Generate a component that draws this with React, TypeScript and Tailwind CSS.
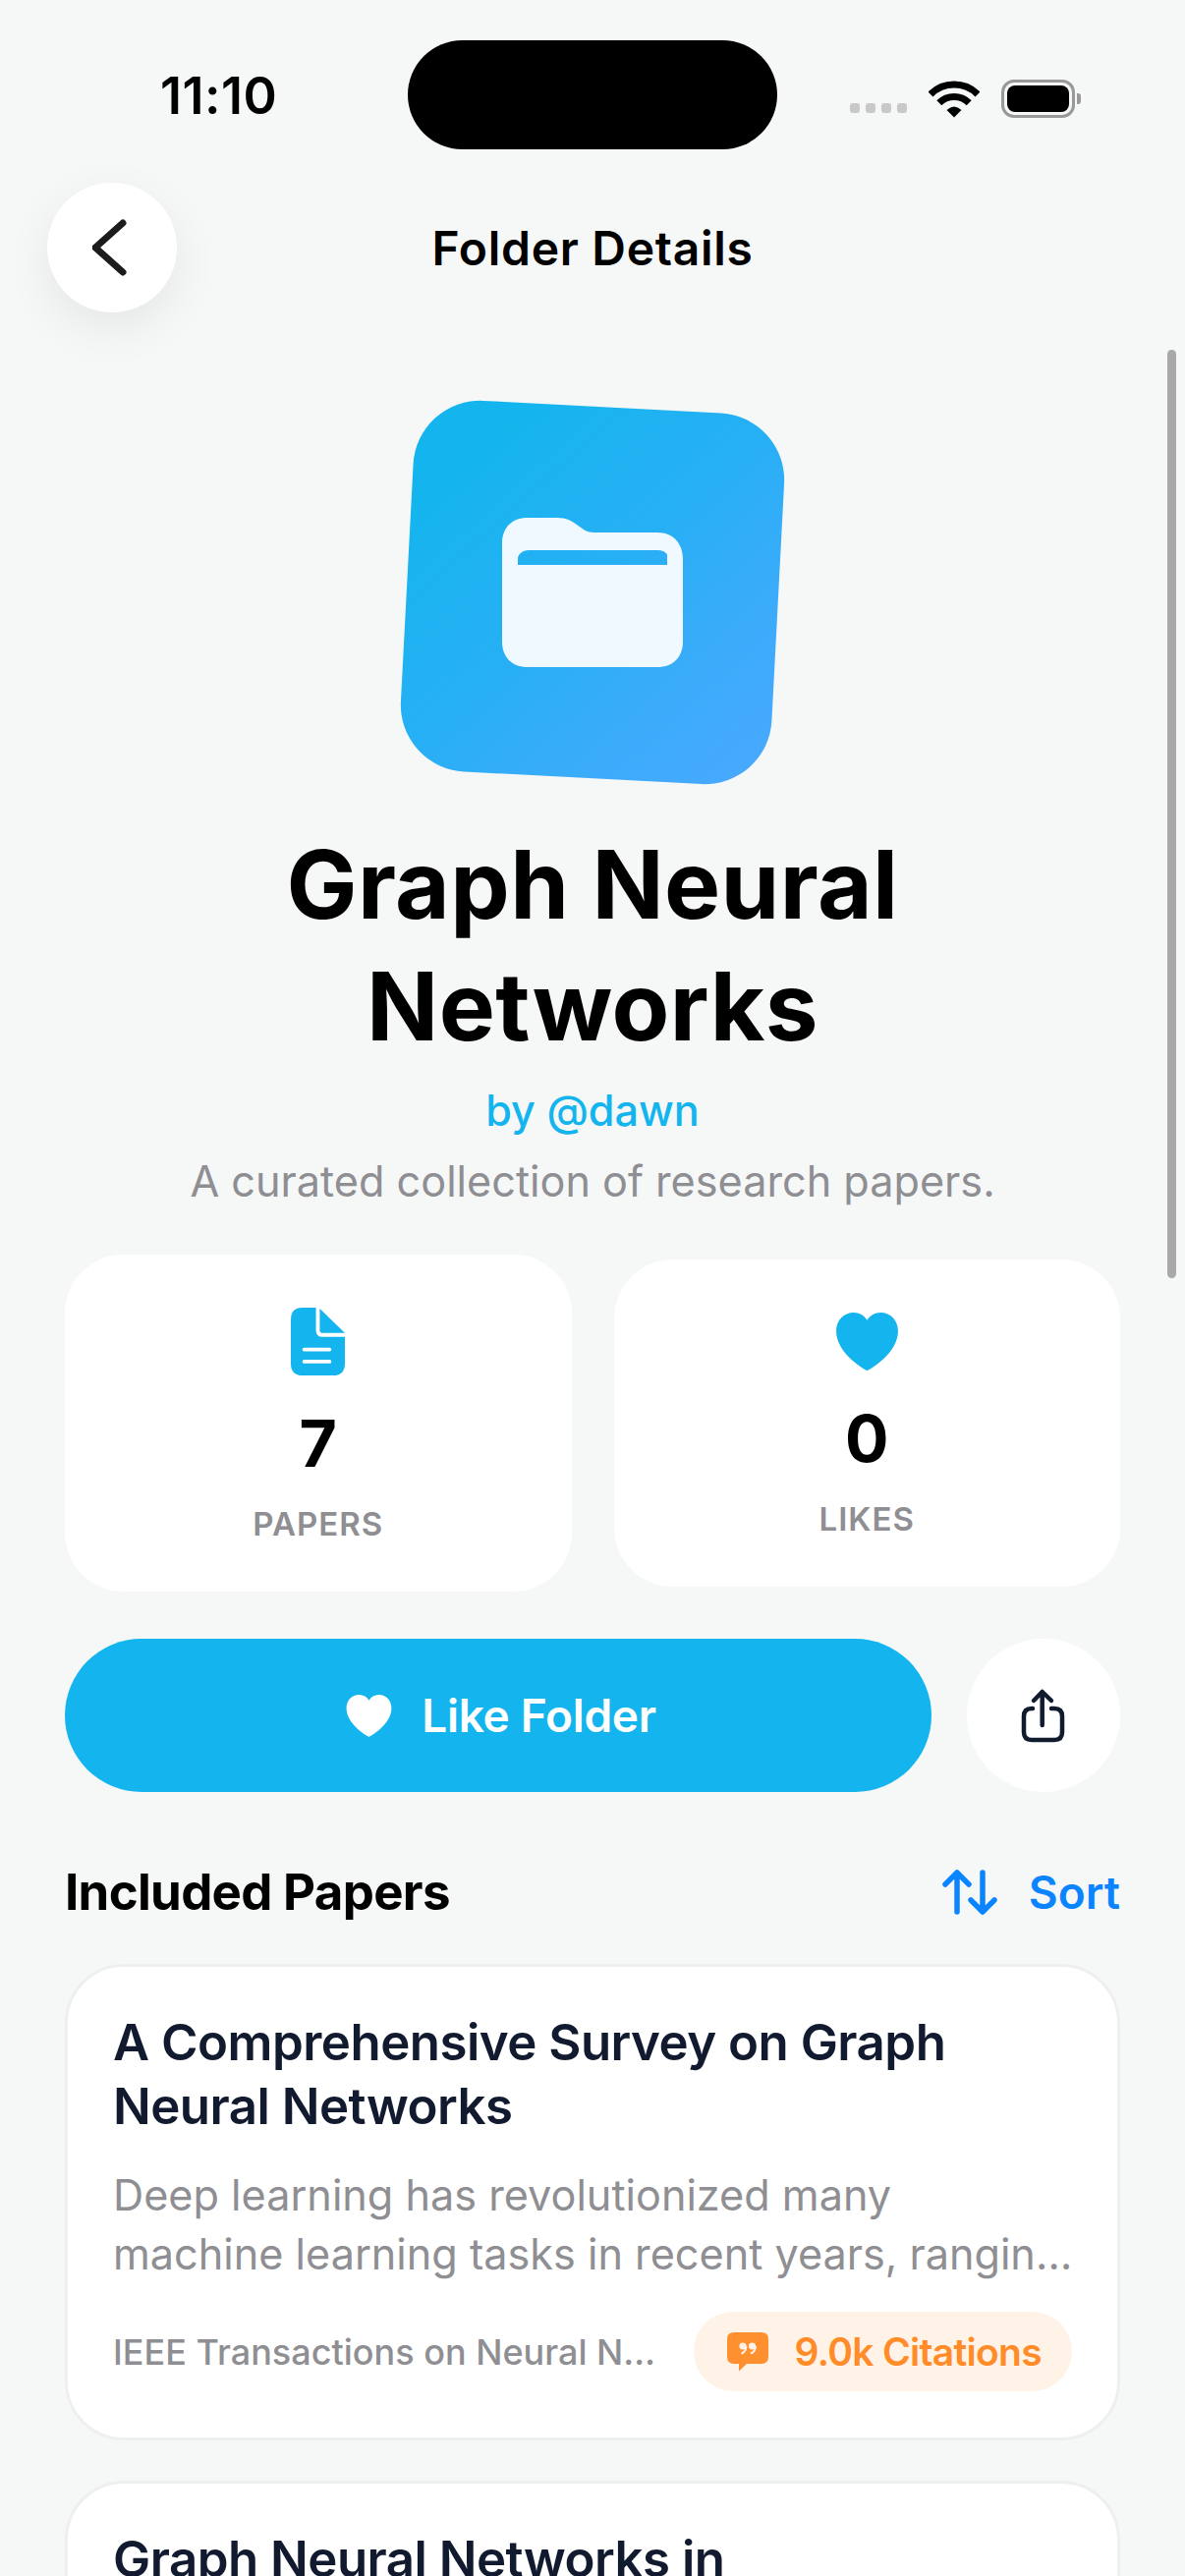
function Wifi() {
  return (
    <svg width="52" height="38" viewBox="0 0 51 38" fill="none" stroke="#000" strokeWidth="7">
      <path d="M1.5 14A34 34 0 0 1 49.5 14" />
      <path d="M10.3 22.8A21.5 21.5 0 0 1 40.7 22.8" />
      <path d="M25.5 37.5L18 30Q25.5 23 33 30Z" fill="#000" stroke="none" />
    </svg>
  );
}

function StatusBar() {
  return (
    <div className="relative h-[111px] mt-[41px] flex items-center shrink-0">
      <span className="ml-[163px] pt-[2px] text-[52px] leading-none font-semibold tracking-[0.5px] text-black">11:10</span>
      <div className="absolute left-[415px] top-0 w-[376px] h-[111px] rounded-[56px] bg-black" />
      <div className="ml-auto mr-[106px] flex items-end gap-[6px] pt-[7px]">
        <span className="w-[10px] h-[10px] rounded-[3px] bg-[#c8c8c8] mb-[5px]" />
        <span className="w-[10px] h-[10px] rounded-[3px] bg-[#c8c8c8] mb-[5px]" />
        <span className="w-[10px] h-[10px] rounded-[3px] bg-[#c8c8c8] mb-[5px]" />
        <span className="w-[10px] h-[10px] rounded-[3px] bg-[#c8c8c8] mb-[5px] mr-[16px]" />
        <Wifi />
        <div className="ml-[16px] flex items-center gap-[2px]">
          <div className="w-[75px] h-[39px] rounded-[13px] border-[3px] border-[#999999] p-[3px]">
            <div className="w-full h-full rounded-[8px] bg-black" />
          </div>
          <div className="w-[4px] h-[11px] rounded-r-[3px] bg-[#999999]" />
        </div>
      </div>
    </div>
  );
}

function HeartIcon({ className }: { className: string }) {
  return (
    <svg className={className} viewBox="0 0 64 60" fill="currentColor">
      <path d="M32 60C29 59 0 42 0 19C0 8 8 0 18 0C24 0 29 3 32 8C35 3 40 0 46 0C56 0 64 8 64 19C64 42 35 59 32 60Z" />
    </svg>
  );
}

function DocIcon() {
  return (
    <svg className="w-[55px] h-[69px] text-[#14b5ee]" viewBox="0 0 56 67" preserveAspectRatio="none" fill="currentColor">
      <path d="M12 0H26V22Q26 29 33 29H56V55Q56 67 44 67H12Q0 67 0 55V12Q0 0 12 0Z" />
      <path d="M30 1L56 25H32Q30 25 30 23Z" />
      <rect x="12" y="39.5" width="30" height="3.6" rx="1.8" fill="#fff" />
      <rect x="12" y="51.5" width="30" height="3.6" rx="1.8" fill="#fff" />
    </svg>
  );
}

function QuoteIcon() {
  return (
    <svg className="w-[42px] h-[40px] shrink-0" viewBox="9 10 42 40" fill="#ff9030">
      <path d="M16 10H44Q51 10 51 17V35Q51 42 44 42H29L21 49.5V42H16Q9 42 9 35V17Q9 10 16 10Z" />
      <circle cx="25" cy="24" r="3.6" fill="#fff3e8" />
      <circle cx="34.5" cy="24" r="3.6" fill="#fff3e8" />
      <path d="M28.4 24C28.4 28 26.5 30.5 23.5 31.5" stroke="#fff3e8" strokeWidth="2" fill="none" />
      <path d="M37.9 24C37.9 28 36 30.5 33 31.5" stroke="#fff3e8" strokeWidth="2" fill="none" />
    </svg>
  );
}

type Paper = { title: string; abstract: [string, string]; journal: string; citations: string };

const papers: Paper[] = [
  {
    title: "A Comprehensive Survey on Graph Neural Networks",
    abstract: [
      "Deep learning has revolutionized many",
      "machine learning tasks in recent years, ranging from image classification and video processing.",
    ],
    journal: "IEEE Transactions on Neural Networks and Learning Systems",
    citations: "9.0k Citations",
  },
  {
    title: "Graph Neural Networks in Recommender Systems: A Survey",
    abstract: [
      "With the explosive growth of online",
      "information, recommender systems play a key role in alleviating information overload.",
    ],
    journal: "ACM Computing Surveys",
    citations: "1.2k Citations",
  },
];

function PaperCard({ paper }: { paper: Paper }) {
  return (
    <div className="shrink-0 rounded-[60px] border-[3px] border-[#eeefef] bg-white px-[46px] pt-[44px] pb-[47px]">
      <h3 className="text-[51px] leading-[65px] font-semibold tracking-[-0.52px] text-[#111a2e]">{paper.title}</h3>
      <p className="mt-[28px] -mr-[4px] text-[43.2px] leading-[60px] text-[#8e8e93]">
        <span className="block">{paper.abstract[0]}</span>
        <span className="block truncate">{paper.abstract[1]}</span>
      </p>
      <div className="mt-[29px] flex items-center gap-[24px]">
        <span className="flex-1 min-w-0 truncate text-[36px] leading-[50px] font-medium text-[#8e8e93]">{paper.journal}</span>
        <div className="shrink-0 h-[81px] flex items-center gap-[27px] pl-[34px] pr-[31px] rounded-[42px] bg-[#fff3e8]">
          <QuoteIcon />
          <span className="text-[39px] leading-[50px] font-semibold tracking-[-0.7px] text-[#ff8c28]">{paper.citations}</span>
        </div>
      </div>
    </div>
  );
}

export default function App() {
  return (
    <div className="relative w-[1206px] h-[2622px] overflow-hidden bg-[#f6f8f8] font-[family-name:Inter,sans-serif] flex flex-col">
      <StatusBar />

      <div className="mt-[34px] h-[132px] shrink-0 grid grid-cols-[1fr_auto_1fr] items-center">
        <button className="ml-[48px] w-[132px] h-[132px] rounded-full bg-white shadow-[0_16px_48px_rgba(0,0,0,0.07)] flex items-center justify-center">
          <svg width="40" height="60" viewBox="0 0 40 60" fill="none" stroke="#1c1c1e" strokeWidth="7" strokeLinecap="round" strokeLinejoin="round">
            <path d="M31 5L3 30L31 55" />
          </svg>
        </button>
        <h1 className="pt-[2px] text-[48px] leading-[60px] font-semibold tracking-[0.7px] text-black">Folder Details</h1>
        <div />
      </div>

      <div className="mt-[96px] shrink-0 flex justify-center">
        <div className="w-[378px] h-[378px] rotate-3 rounded-[68px] bg-gradient-to-br from-[#14b5ee] from-15% via-[#27aff5] via-50% to-[#4aa8ff] flex items-center justify-center">
          <svg className="-rotate-3" width="184" height="152" viewBox="0 0 184 152" fill="#eff9ff">
            <path
              fillRule="evenodd"
              d="M26 0H56C66 0 70 3 76 7C83 12 86 15 94 15H158C174 15 184 26 184 42V126C184 142 174 152 158 152H26C10 152 0 142 0 126V26C0 10 10 0 26 0ZM16 48H168V38C168 37 165 33 159 33H27C21 33 16 37 16 42Z"
            />
          </svg>
        </div>
      </div>

      <h2 className="mt-[46px] shrink-0 text-center text-[96px] leading-[124px] font-bold tracking-[0.4px] text-black">
        Graph Neural
        <br />
        Networks
      </h2>
      <p className="mt-[14px] shrink-0 text-center text-[43.2px] leading-[60px] font-medium text-[#14b5ee]">by @dawn</p>
      <p className="mt-[12px] shrink-0 text-center text-[43.2px] leading-[60px] text-[#8e8e93]">A curated collection of research papers.</p>

      <div className="mt-[45px] shrink-0 mx-[66px] flex items-center gap-[43px]">
        <div className="flex-1 rounded-[60px] bg-white pt-[54px] pb-[47px] flex flex-col items-center">
          <DocIcon />
          <span className="mt-[29px] text-[66px] leading-[80px] font-bold text-black">7</span>
          <span className="mt-[20px] text-[33px] leading-[44px] font-semibold tracking-[1px] text-[#8e8e93]">PAPERS</span>
        </div>
        <div className="flex-1 rounded-[60px] bg-white pt-[54px] pb-[47px] flex flex-col items-center">
          <HeartIcon className="w-[65px] h-[59px] text-[#14b5ee]" />
          <span className="mt-[29px] text-[66px] leading-[80px] font-bold text-black">0</span>
          <span className="mt-[20px] text-[33px] leading-[44px] font-semibold tracking-[1px] text-[#8e8e93]">LIKES</span>
        </div>
      </div>

      <div className="mt-[48px] shrink-0 mx-[66px] flex items-center gap-[36px]">
        <button className="flex-1 h-[156px] pl-[6px] rounded-full bg-[#14b5ee] flex items-center justify-center gap-[30px] text-white">
          <HeartIcon className="w-[47px] h-[43px]" />
          <span className="text-[46px] leading-[60px] font-semibold tracking-[-0.3px]">Like Folder</span>
        </button>
        <button className="w-[156px] h-[156px] rounded-full bg-white flex items-center justify-center">
          <svg width="80" height="80" viewBox="3 0 80 80" fill="none" stroke="#111b2e" strokeWidth="4.5" strokeLinecap="round" strokeLinejoin="round">
            <path d="M32 33H31Q23 33 23 41V57Q23 65 31 65H54Q62 65 62 57V41Q62 33 54 33H51" />
            <path d="M41.7 16V50M33 25L41.7 16L51 25" />
          </svg>
        </button>
      </div>

      <div className="mt-[67px] shrink-0 mx-[66px] flex items-center justify-between">
        <h2 className="text-[51px] leading-[70px] font-bold tracking-[-0.7px] text-black">Included Papers</h2>
        <button className="flex items-center gap-[28px] text-[#0a84ff]">
          <svg className="w-[60px] h-[50px] -translate-x-[1px]" viewBox="9 7 60 50" fill="none" stroke="currentColor" strokeWidth="5.5" strokeLinecap="round" strokeLinejoin="round">
            <path d="M25 52V12M13 24L25 12L37 24" />
            <path d="M51 12V52M39 40L51 52L63 40" />
          </svg>
          <span className="text-[46px] leading-[60px] font-semibold">Sort</span>
        </button>
      </div>

      <div className="mt-[38px] mx-[66px] flex flex-col gap-[41px]">
        {papers.map((p) => (
          <PaperCard key={p.title} paper={p} />
        ))}
      </div>

      <div className="absolute left-[1188px] top-[356px] w-[9px] h-[945px] rounded-full bg-[#a9a9a9]" />
    </div>
  );
}
